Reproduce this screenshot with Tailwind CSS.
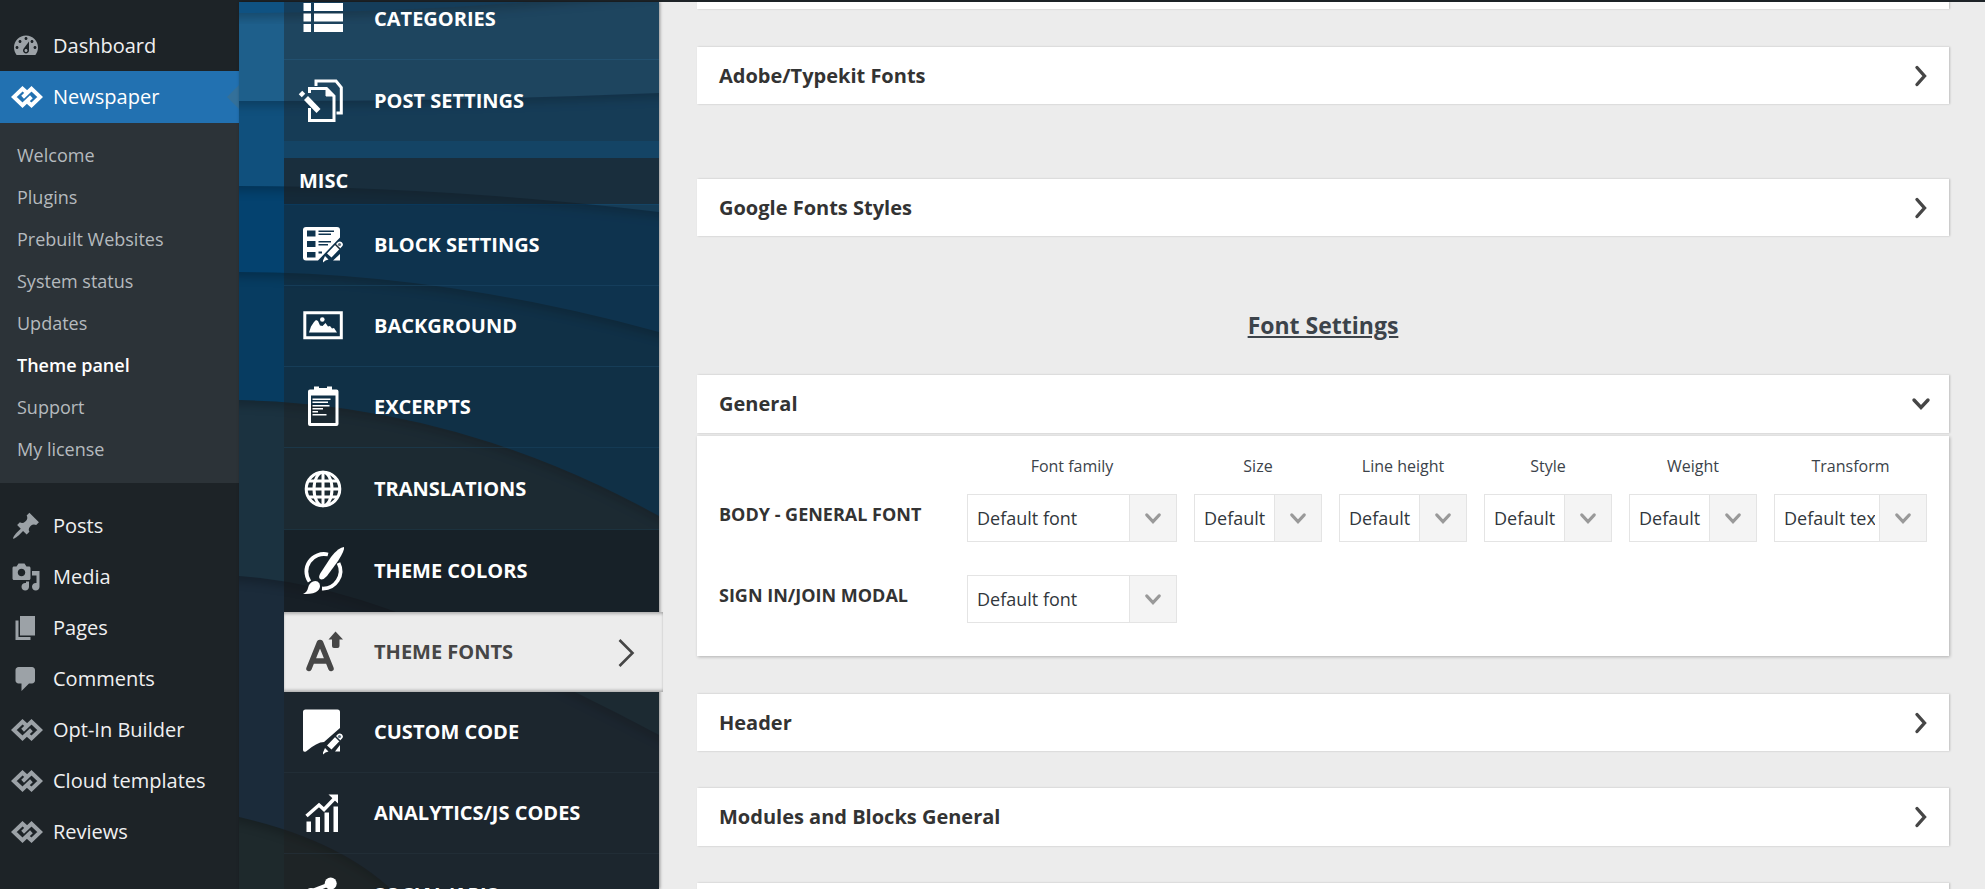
<!DOCTYPE html>
<html lang="en">
<head>
    <meta charset="UTF-8">
    <meta name="viewport" content="width=device-width, initial-scale=1.0">
    <title>Theme panel - Newspaper</title>
    <script src="https://cdn.jsdelivr.net/npm/@tailwindcss/browser@4"></script>
</head>
<body class="flex h-screen flex-col overflow-hidden bg-[#ececec] font-['Open_Sans','Noto_Sans',sans-serif]">

    <!-- shared icons -->
    <svg class="hidden">
        <symbol id="td" viewBox="0 0 32 22">
            <g fill="none" stroke="currentColor" stroke-width="4">
                <path d="M16.300 7 11.500 2.800 2.800 11 11.500 19.200 20.400 10.800"/>
                <path d="M15.700 15 20.500 19.200 29.200 11 20.500 2.800 11.600 11.200"/>
            </g>
        </symbol>
        <symbol id="right" viewBox="0 0 20 26">
            <path d="M6 4.500 13.500 13 6 21.500" fill="none" stroke="currentColor" stroke-width="3.400" stroke-linecap="round"/>
        </symbol>
        <symbol id="down" viewBox="0 0 20 14">
            <path d="M3 3 10 10.500 17 3" fill="none" stroke="currentColor" stroke-width="3.400" stroke-linecap="round"/>
        </symbol>
        <symbol id="pen" viewBox="0 0 24 24">
            <path d="M6.500 14.500 17 3.500Q19 1.500 21.300 3.200 23.500 5.500 21.500 7.500L11 18.500Z" fill="#fff"/>
            <path d="M14.500 5 19.500 10" stroke="#1a2a36" stroke-width="1.500"/>
            <circle cx="19" cy="5.500" r="1.600" fill="#5d7180"/>
            <path d="M4.500 17 8 20.500 5 21.500 2.500 23.500 2.500 21.500Z" fill="#fff"/>
        </symbol>
    </svg>

    <header class="h-[2px] shrink-0 bg-[#1d2327]"></header>

    <div class="flex min-h-0 flex-1">

        <!-- admin menu -->
        <nav class="w-[239px] shrink-0 bg-[#1d2327] pt-[18px] text-[20px] leading-6 text-[#f0f0f1]">
            <a href="#" class="flex h-[51px] items-center gap-3 pl-[11px]">
                <svg class="size-[30px] text-[#9ca2a7]" viewBox="0 0 20 20" fill="currentColor"><path d="M3.760 16h12.480c1.100-1.370 1.760-3.110 1.760-5 0-4.420-3.580-8-8-8s-8 3.580-8 8c0 1.890.66 3.630 1.760 5zM10 4c.55 0 1 .45 1 1s-.45 1-1 1-1-.45-1-1 .45-1 1-1zM6 6c.55 0 1 .45 1 1s-.45 1-1 1-1-.45-1-1 .45-1 1-1zm8 0c.55 0 1 .45 1 1s-.45 1-1 1-1-.45-1-1 .45-1 1-1zm-5.370 5.550L12 7v6c0 1.100-.9 2-2 2s-2-.9-2-2c0-.57.24-1.080.63-1.450zM4 10c.55 0 1 .45 1 1s-.45 1-1 1-1-.45-1-1 .45-1 1-1zm12 0c.55 0 1 .45 1 1s-.45 1-1 1-1-.45-1-1 .45-1 1-1zm-5 3c0-.55-.45-1-1-1s-1 .45-1 1 .45 1 1 1 1-.45 1-1z"/></svg>
                Dashboard
            </a>
            <a href="#" class="relative flex h-[52px] items-center gap-[10px] bg-[#2271b1] pl-[11px] text-white">
                <svg class="h-[22px] w-8"><use href="#td"/></svg>
                Newspaper
                <svg class="absolute right-0 h-6 w-3" viewBox="0 0 12 24"><path d="M12 0v24L0 12z" fill="#33709a"/></svg>
            </a>
            <div class="flex flex-col bg-[#2c3338] pt-[11px] pb-[13px] text-[18px] text-[#b5babe]">
                <a href="#" class="flex h-[42px] items-center pl-[17px]">Welcome</a>
                <a href="#" class="flex h-[42px] items-center pl-[17px]">Plugins</a>
                <a href="#" class="flex h-[42px] items-center pl-[17px]">Prebuilt Websites</a>
                <a href="#" class="flex h-[42px] items-center pl-[17px]">System status</a>
                <a href="#" class="flex h-[42px] items-center pl-[17px]">Updates</a>
                <a href="#" class="flex h-[42px] items-center pl-[17px] font-semibold text-white">Theme panel</a>
                <a href="#" class="flex h-[42px] items-center pl-[17px]">Support</a>
                <a href="#" class="flex h-[42px] items-center pl-[17px]">My license</a>
            </div>
            <div class="pt-[17px]">
                <a href="#" class="flex h-[51px] items-center gap-3 pl-[11px]">
                    <svg class="size-[30px] text-[#9ca2a7]" viewBox="0 0 20 20" fill="currentColor"><path d="M10.440 3.020l1.820-1.820 6.360 6.350-1.830 1.820c-1.050-.68-2.480-.57-3.410.36l-.75.75c-.92.93-1.040 2.350-.35 3.410l-1.830 1.820-2.410-2.410-2.800 2.790c-.42.42-3.380 2.710-3.800 2.290s1.860-3.390 2.280-3.810l2.790-2.790L4.100 9.360l1.830-1.820c1.050.69 2.480.57 3.400-.36l.75-.75c.93-.92 1.050-2.350.36-3.410z"/></svg>
                    Posts
                </a>
                <a href="#" class="flex h-[51px] items-center gap-3 pl-[11px]">
                    <svg class="size-[30px] text-[#9ca2a7]" viewBox="0 0 20 20" fill="currentColor"><path d="M13 11V4c0-.55-.45-1-1-1h-1.670L9 1H5L3.670 3H2c-.55 0-1 .45-1 1v7c0 .55.45 1 1 1h10c.55 0 1-.45 1-1zM7 4.500c1.380 0 2.500 1.120 2.500 2.500S8.380 9.500 7 9.500 4.500 8.380 4.500 7 5.620 4.500 7 4.500zM14 6h5v10.500c0 1.380-1.120 2.500-2.500 2.500S14 17.880 14 16.500s1.120-2.500 2.500-2.500c.17 0 .34.020.5.050V9h-3V6zm-4 8.050V13h2v3.500c0 1.380-1.120 2.500-2.500 2.500S7 17.880 7 16.500 8.120 14 9.500 14c.17 0 .34.020.5.050z"/></svg>
                    Media
                </a>
                <a href="#" class="flex h-[51px] items-center gap-3 pl-[11px]">
                    <svg class="size-[30px] text-[#9ca2a7]" viewBox="0 0 20 20" fill="currentColor"><path d="M6 15V2h10v13H6zm-1 1h8v2H3V5h2v11z"/></svg>
                    Pages
                </a>
                <a href="#" class="flex h-[51px] items-center gap-3 pl-[11px]">
                    <svg class="size-[30px] text-[#9ca2a7]" viewBox="0 0 20 20" fill="currentColor"><path d="M5 2h9c1.100 0 2 .9 2 2v7c0 1.100-.9 2-2 2h-2l-5 5v-5H5c-1.100 0-2-.9-2-2V4c0-1.100.9-2 2-2z"/></svg>
                    Comments
                </a>
                <a href="#" class="flex h-[51px] items-center gap-[10px] pl-[11px]">
                    <svg class="h-[22px] w-8 text-[#9ca2a7]"><use href="#td"/></svg>
                    Opt-In Builder
                </a>
                <a href="#" class="flex h-[51px] items-center gap-[10px] pl-[11px]">
                    <svg class="h-[22px] w-8 text-[#9ca2a7]"><use href="#td"/></svg>
                    Cloud templates
                </a>
                <a href="#" class="flex h-[51px] items-center gap-[10px] pl-[11px]">
                    <svg class="h-[22px] w-8 text-[#9ca2a7]"><use href="#td"/></svg>
                    Reviews
                </a>
            </div>
        </nav>

        <!-- theme panel sections -->
        <aside class="relative w-[420px] shrink-0 pl-[45px] shadow-[1px_0_3px_rgba(0,0,0,0.4)]">
            <svg class="absolute inset-0 size-full" viewBox="0 0 420 887" preserveAspectRatio="xMinYMin slice">
                <filter id="sh" x="-10%" y="-10%" width="120%" height="130%" color-interpolation-filters="sRGB"><feDropShadow dx="0" dy="5" stdDeviation="5" flood-opacity=".22"/></filter>
                <rect width="420" height="1400" fill="#1e292c"/>
                <g filter="url(#sh)"><path d="M-30-40H450V920H180Q130 845 0 815L-30 812Z" fill="#1b2b3a"/></g>
                <g filter="url(#sh)"><path d="M-30-40H450V750L420 733Q320 680 200 627 90 580 0 574H-30Z" fill="#1b3240"/></g>
                <g filter="url(#sh)"><path d="M-30-40H450V530L420 514Q220 403 0 398H-30Z" fill="#073c61"/></g>
                <g filter="url(#sh)"><path d="M-30-40H450V338L420 330Q200 270 0 270H-30Z" fill="#04426f"/></g>
                <g filter="url(#sh)"><path d="M-30-40H450V214L420 210Q200 184 0 184H-30Z" fill="#10507d"/></g>
                <g filter="url(#sh)"><path d="M-30-40H450V88L420 91Q200 100 0 99H-30Z" fill="#1e5f8b"/></g>
                <g filter="url(#sh)"><path d="M-30-40H450V-16L420-12Q200 12 0 11H-30Z" fill="#0f5282"/></g>
            </svg>
            <div class="relative flow-root h-full overflow-x-visible overflow-y-clip bg-[#1e1e1e]/25">
                <div class="-mt-6 flex flex-col text-[20px] leading-6 font-bold text-white">
                    <a href="#" class="flex h-[82px] shrink-0 items-center gap-7 border-b border-[#24587a]/60 bg-[#1e1e1e]/20 pl-[14px]">
                        <svg class="size-12" viewBox="0 0 48 48" fill="#fff"><path d="M5.500 8h7.500v8H5.500zM16 8h29v8H16zM5.500 18.500h7.500v8H5.500zM16 18.500h29v8H16zM5.500 29h7.500v8H5.500zM16 29h29v8H16z"/></svg>
                        CATEGORIES
                    </a>
                    <a href="#" class="flex h-[81px] shrink-0 items-center gap-7 bg-[#1e1e1e]/20 pl-[14px]">
                        <svg class="size-12" viewBox="0 0 48 48" fill="none" stroke="#fff" stroke-width="3"><path d="M18 9V4H38L43.300 10.500V36H38.500M11.500 16V11.500H28.500L36 19V43.500H11.500V31"/><path d="M28 11v8h8z" fill="#fff" stroke-width="1"/><path d="M8 21 20.500 34" stroke-width="5.500"/><path d="M2.500 15.500 5.500 18.500" stroke-width="5"/></svg>
                        POST SETTINGS
                    </a>
                    <h2 class="mt-[17px] flex h-[46px] shrink-0 items-center bg-[#1e1e1e]/55 pl-[15px]">MISC</h2>
                    <a href="#" class="mt-px flex h-[81px] shrink-0 items-center gap-7 border-b border-[#1b4a6a]/50 bg-[#1e1e1e]/20 pl-[14px]">
                        <svg class="size-12" viewBox="0 0 48 48" fill="#fff"><path fill-rule="evenodd" d="M8 6h31q3 0 3 3v7.500L20 39.500H8q-3 0-3-3V9q0-3 3-3zM9 9.500v6h8.500v-6zM9 20v6h8.500v-6zM9 31v5.500h8.500V31zM20.500 9.500v1.500H36V9.500zM20.500 12.500V14H33v-1.500zM20.500 20v1.500H33V20zM20.500 23v1.500H30V23zM20.500 30.500v2H24v-2z"/><path d="M42 33v6.500h-7z"/><svg x="22.500" y="18" width="24" height="24"><use href="#pen"/></svg></svg>
                        BLOCK SETTINGS
                    </a>
                    <a href="#" class="flex h-[81px] shrink-0 items-center gap-7 border-b border-[#1b4a6a]/50 bg-[#1e1e1e]/20 pl-[14px]">
                        <svg class="size-12" viewBox="0 0 48 48" fill="#fff"><path d="M6.800 10.800h36.500v25H6.800z" fill="none" stroke="#fff" stroke-width="3"/><circle cx="24.300" cy="17.500" r="2.300"/><path d="M11 30.500 13 24.500 16 20 18 18 20 19 22 23.500 24.500 24 27.500 21 30 24.500 32 24 34 26.500 36 26 39 30.500z"/></svg>
                        BACKGROUND
                    </a>
                    <a href="#" class="flex h-[81px] shrink-0 items-center gap-7 border-b border-[#1b4a6a]/40 bg-[#1e1e1e]/20 pl-[14px]">
                        <svg class="size-12" viewBox="0 0 48 48" fill="#fff"><path fill-rule="evenodd" d="M12 6.500h4v-3h5V5h8V3.500h5v3h4.500q2 0 2 2V41q0 2-2 2H12q-2 0-2-2V8.500q0-2 2-2zM13 12.500V40h24.500V12.500z"/><path d="M14.500 15.500h18V17h-18zM14.500 18.500h15.500V20H14.500zM14.500 22h17v1.500h-17zM14.500 25h10.500v1.500H14.500zM14.500 28h5.500v1.500h-5.500zM14.500 31h14v1.500h-14z"/></svg>
                        EXCERPTS
                    </a>
                    <a href="#" class="flex h-[82px] shrink-0 items-center gap-7 border-b border-[#1b3a4a]/50 bg-[#1e1e1e]/20 pl-[14px]">
                        <svg class="size-12" viewBox="0 0 48 48" fill="none" stroke="#fff" stroke-width="3"><circle cx="25" cy="24" r="16.800"/><ellipse cx="25" cy="24" rx="9" ry="16.800"/><path d="M25 7v34M8 24h34M10.500 16h29M10.500 32h29"/></svg>
                        TRANSLATIONS
                    </a>
                    <a href="#" class="flex h-[82px] shrink-0 items-center gap-7 bg-[#121416]/45 pl-[14px]">
                        <svg class="size-12" viewBox="0 0 48 48" fill="#fff"><path d="M11.500 34.500A17.500 17.500 0 0 1 30 7.500M40.500 16A17.500 17.500 0 0 1 24 41.500" fill="none" stroke="#fff" stroke-width="3.800"/><path d="M46 0Q47 3 40 14L29 29Q25 33.500 22 32 20 30 22.500 26L33 10Q41 0 46 0z"/><path d="M15 34.500Q19 33 21.500 36.500 23 41 19.500 44 16 47.500 5 47 9 45.500 10 41 11 36 15 34.500z"/></svg>
                        THEME COLORS
                    </a>
                    <!-- the open section runs over the panel's edge -->
                    <a href="#" class="-mr-1 flex h-20 shrink-0 items-center gap-7 bg-[#ececec] pr-7 pl-[14px] text-[#464646] shadow-[inset_0_3px_3px_-1px_rgba(0,0,0,0.25),inset_0_-3px_3px_-1px_rgba(0,0,0,0.25)]">
                        <svg class="size-12" viewBox="0 0 48 48" fill="#464646"><path d="M11 40.500 21.500 14.500h1L33 40.500M15 33H29" fill="none" stroke="#464646" stroke-width="5.500" stroke-linecap="round" stroke-linejoin="round"/><path d="M37.500 3.500 45 11.500H41.500V18q0 2-2 2H36q-2 0-2-2V11.500H30.500z"/></svg>
                        THEME FONTS
                        <svg class="ml-auto h-8 w-[18px]" viewBox="0 0 18 32"><path d="M2.500 4 15.500 17 2.500 30" fill="none" stroke="#464646" stroke-width="2.600"/></svg>
                    </a>
                    <a href="#" class="flex h-[81px] shrink-0 items-center gap-7 border-b border-[#24323c]/60 bg-[#1e1e1e]/20 pl-[14px]">
                        <svg class="size-12" viewBox="0 0 48 48" fill="#fff"><path d="M7.500 1.500H39.500q2.500 0 2.500 2.500V20L26 34Q19 34 8 43.500 5 44.500 5 42V4q0-2.500 2.500-2.500z"/><path d="M42 37v6.500h-5z"/><svg x="22.500" y="23" width="24" height="24"><use href="#pen"/></svg></svg>
                        CUSTOM CODE
                    </a>
                    <a href="#" class="flex h-[81px] shrink-0 items-center gap-7 border-b border-[#24323c]/60 bg-[#1e1e1e]/20 pl-[14px]">
                        <svg class="size-12" viewBox="0 0 48 48" fill="#fff"><path d="M8.500 32.500H13V43H8.500zM17.500 28H22V43H17.500zM26.500 23.500H31V43H26.500zM35.500 17.500H40V43H35.500zM30.500 5.500H40V14.500z"/><path d="M8.500 27 21 16 26 20.500 37 9" fill="none" stroke="#fff" stroke-width="3.500"/></svg>
                        ANALYTICS/JS CODES
                    </a>
                    <a href="#" class="flex h-[81px] shrink-0 items-center gap-7 bg-[#1e1e1e]/20 pl-[14px]">
                        <svg class="size-12" viewBox="0 0 48 48" fill="#fff"><circle cx="32.700" cy="12.500" r="6"/><path d="M32 13 14 20" stroke="#fff" stroke-width="4"/><circle cx="13" cy="23" r="6"/><circle cx="34" cy="36" r="6"/><path d="M14 24 34 36" stroke="#fff" stroke-width="4"/></svg>
                        SOCIAL/APIS
                    </a>
                </div>
            </div>
        </aside>

        <!-- settings -->
        <main class="min-w-0 flex-1 overflow-hidden pr-9 pl-[38px] text-[#333]">
            <div class="h-[7px] bg-white shadow-[1px_0_2px_rgba(0,0,0,0.2)]"></div>

            <button type="button" class="mt-[38px] flex h-[57px] w-full items-center justify-between bg-white pr-[18px] pl-[22px] text-[20px] font-bold shadow-[1px_0_2px_rgba(0,0,0,0.2)]">
                Adobe/Typekit Fonts
                <svg class="h-[26px] w-5 text-[#464646]"><use href="#right"/></svg>
            </button>

            <button type="button" class="mt-[75px] flex h-[57px] w-full items-center justify-between bg-white pr-[18px] pl-[22px] text-[20px] font-bold shadow-[1px_0_2px_rgba(0,0,0,0.2)]">
                Google Fonts Styles
                <svg class="h-[26px] w-5 text-[#464646]"><use href="#right"/></svg>
            </button>

            <h2 class="mt-[74px] text-center text-[23px] leading-[30px] font-bold text-[#3c434a] underline decoration-2 underline-offset-2">Font Settings</h2>

            <button type="button" class="mt-[35px] flex h-[58px] w-full items-center justify-between bg-white pr-[18px] pl-[22px] text-[20px] font-bold shadow-[1px_0_2px_rgba(0,0,0,0.2)]">
                General
                <svg class="h-[14px] w-5 text-[#464646]"><use href="#down"/></svg>
            </button>
            <section class="mt-[3px] bg-white pt-[18px] pb-[33px] pl-[22px] text-[16px] text-[#3c434a] shadow-[1px_1px_3px_rgba(0,0,0,0.25)]">
                <div class="flex items-end gap-[17px]">
                    <h3 class="flex h-12 w-[231px] items-center pb-2 text-[18px] font-bold text-[#333]">BODY - GENERAL FONT</h3>
                    <div class="flex w-[210px] flex-col gap-4 text-center">
                        <label for="family" class="leading-6">Font family</label>
                        <div class="flex h-12 border border-[#e4e4e4]">
                            <select id="family" class="min-w-0 flex-1 appearance-none pr-1 pl-[9px] text-[18px] text-[#32373c]"><option>Default font</option></select>
                            <span class="flex w-[47px] items-center justify-center border-l border-[#e4e4e4] bg-[#f4f4f4] text-[#999]"><svg class="h-[13px] w-[18px]"><use href="#down"/></svg></span>
                        </div>
                    </div>
                    <div class="flex w-[128px] flex-col gap-4 text-center">
                        <label for="size" class="leading-6">Size</label>
                        <div class="flex h-12 border border-[#e4e4e4]">
                            <select id="size" class="min-w-0 flex-1 appearance-none pr-1 pl-[9px] text-[18px] text-[#32373c]"><option>Default</option></select>
                            <span class="flex w-[47px] items-center justify-center border-l border-[#e4e4e4] bg-[#f4f4f4] text-[#999]"><svg class="h-[13px] w-[18px]"><use href="#down"/></svg></span>
                        </div>
                    </div>
                    <div class="flex w-[128px] flex-col gap-4 text-center">
                        <label for="line" class="leading-6">Line height</label>
                        <div class="flex h-12 border border-[#e4e4e4]">
                            <select id="line" class="min-w-0 flex-1 appearance-none pr-1 pl-[9px] text-[18px] text-[#32373c]"><option>Default</option></select>
                            <span class="flex w-[47px] items-center justify-center border-l border-[#e4e4e4] bg-[#f4f4f4] text-[#999]"><svg class="h-[13px] w-[18px]"><use href="#down"/></svg></span>
                        </div>
                    </div>
                    <div class="flex w-[128px] flex-col gap-4 text-center">
                        <label for="style" class="leading-6">Style</label>
                        <div class="flex h-12 border border-[#e4e4e4]">
                            <select id="style" class="min-w-0 flex-1 appearance-none pr-1 pl-[9px] text-[18px] text-[#32373c]"><option>Default</option></select>
                            <span class="flex w-[47px] items-center justify-center border-l border-[#e4e4e4] bg-[#f4f4f4] text-[#999]"><svg class="h-[13px] w-[18px]"><use href="#down"/></svg></span>
                        </div>
                    </div>
                    <div class="flex w-[128px] flex-col gap-4 text-center">
                        <label for="weight" class="leading-6">Weight</label>
                        <div class="flex h-12 border border-[#e4e4e4]">
                            <select id="weight" class="min-w-0 flex-1 appearance-none pr-1 pl-[9px] text-[18px] text-[#32373c]"><option>Default</option></select>
                            <span class="flex w-[47px] items-center justify-center border-l border-[#e4e4e4] bg-[#f4f4f4] text-[#999]"><svg class="h-[13px] w-[18px]"><use href="#down"/></svg></span>
                        </div>
                    </div>
                    <div class="flex w-[153px] flex-col gap-4 text-center">
                        <label for="transform" class="leading-6">Transform</label>
                        <div class="flex h-12 border border-[#e4e4e4]">
                            <select id="transform" class="min-w-0 flex-1 appearance-none pr-1 pl-[9px] text-[18px] text-[#32373c]"><option>Default text</option></select>
                            <span class="flex w-[47px] items-center justify-center border-l border-[#e4e4e4] bg-[#f4f4f4] text-[#999]"><svg class="h-[13px] w-[18px]"><use href="#down"/></svg></span>
                        </div>
                    </div>
                </div>
                <div class="mt-[33px] flex gap-[17px]">
                    <label for="modal" class="flex h-12 w-[231px] items-center pb-2 text-[18px] font-bold text-[#333]">SIGN IN/JOIN MODAL</label>
                    <div class="flex h-12 w-[210px] border border-[#e4e4e4]">
                        <select id="modal" class="min-w-0 flex-1 appearance-none pr-1 pl-[9px] text-[18px] text-[#32373c]"><option>Default font</option></select>
                        <span class="flex w-[47px] items-center justify-center border-l border-[#e4e4e4] bg-[#f4f4f4] text-[#999]"><svg class="h-[13px] w-[18px]"><use href="#down"/></svg></span>
                    </div>
                </div>
            </section>

            <button type="button" class="mt-[38px] flex h-[57px] w-full items-center justify-between bg-white pr-[18px] pl-[22px] text-[20px] font-bold shadow-[1px_0_2px_rgba(0,0,0,0.2)]">
                Header
                <svg class="h-[26px] w-5 text-[#464646]"><use href="#right"/></svg>
            </button>

            <button type="button" class="mt-[37px] flex h-[58px] w-full items-center justify-between bg-white pr-[18px] pl-[22px] text-[20px] font-bold shadow-[1px_0_2px_rgba(0,0,0,0.2)]">
                Modules and Blocks General
                <svg class="h-[26px] w-5 text-[#464646]"><use href="#right"/></svg>
            </button>

            <div class="mt-[37px] h-[58px] bg-white shadow-[1px_0_2px_rgba(0,0,0,0.2)]"></div>
        </main>
    </div>
</body>
</html>
